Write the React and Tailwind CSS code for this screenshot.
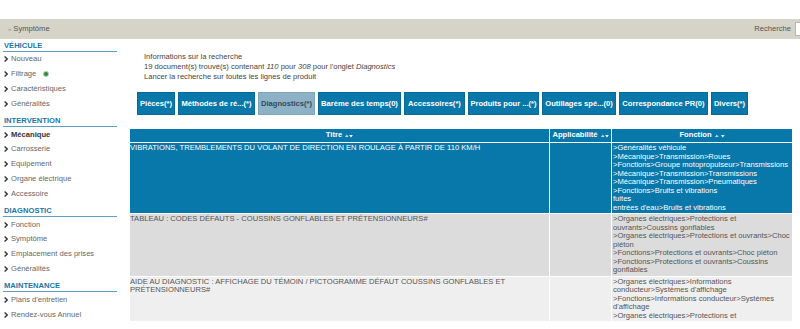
import React from "react";

const SECTIONS = [
  {
    title: "VÉHICULE",
    items: [
      { label: "Nouveau" },
      { label: "Filtrage", dot: true },
      { label: "Caractéristiques" },
      { label: "Généralités" },
    ],
  },
  {
    title: "INTERVENTION",
    items: [
      { label: "Mécanique", active: true },
      { label: "Carrosserie" },
      { label: "Equipement" },
      { label: "Organe électrique" },
      { label: "Accessoire" },
    ],
  },
  {
    title: "DIAGNOSTIC",
    items: [
      { label: "Fonction" },
      { label: "Symptôme" },
      { label: "Emplacement des prises" },
      { label: "Généralités" },
    ],
  },
  {
    title: "MAINTENANCE",
    items: [{ label: "Plans d'entretien" }, { label: "Rendez-vous Annuel" }],
  },
];

const TABS = [
  { label: "Pièces(*)", w: "w-[38px]" },
  { label: "Méthodes de ré...(*)", w: "w-[77px]" },
  { label: "Diagnostics(*)", w: "w-[57px]", current: true },
  { label: "Barème des temps(0)", w: "w-[83px]" },
  { label: "Accessoires(*)", w: "w-[61px]" },
  { label: "Produits pour ...(*)", w: "w-[71px]" },
  { label: "Outillages spé...(0)", w: "w-[74px]" },
  { label: "Correspondance PR(0)", w: "w-[89px]" },
  { label: "Divers(*)", w: "w-[37px]" },
];

const ROWS = [
  {
    bg: "bg-[#0877a9]",
    text: "text-white",
    title: [
      "VIBRATIONS, TREMBLEMENTS DU VOLANT DE DIRECTION EN ROULAGE À PARTIR DE 110 KM/H",
    ],
    fonction: [
      ">Généralités véhicule",
      ">Mécanique>Transmission>Roues",
      ">Fonctions>Groupe motopropulseur>Transmissions",
      ">Mécanique>Transmission>Transmissions",
      ">Mécanique>Transmission>Pneumatiques",
      ">Fonctions>Bruits et vibrations",
      "fuites",
      "entrées d'eau>Bruits et vibrations",
    ],
  },
  {
    bg: "bg-[#dcdcdc]",
    text: "text-[#555]",
    title: ["TABLEAU : CODES DÉFAUTS - COUSSINS GONFLABLES ET PRÉTENSIONNEURS#"],
    fonction: [
      ">Organes électriques>Protections et",
      "ouvrants>Coussins gonflables",
      ">Organes électriques>Protections et ouvrants>Choc",
      "piéton",
      ">Fonctions>Protections et ouvrants>Choc piéton",
      ">Fonctions>Protections et ouvrants>Coussins",
      "gonflables",
    ],
  },
  {
    bg: "bg-[#efefef]",
    text: "text-[#555]",
    title: [
      "AIDE AU DIAGNOSTIC : AFFICHAGE DU TÉMOIN / PICTOGRAMME DÉFAUT COUSSINS GONFLABLES ET",
      "PRÉTENSIONNEURS#",
    ],
    fonction: [
      ">Organes électriques>Informations",
      "conducteur>Systèmes d'affichage",
      ">Fonctions>Informations conducteur>Systèmes",
      "d'affichage",
      ">Organes électriques>Protections et",
    ],
  },
];

function Chevron() {
  return (
    <svg width="4" height="6" viewBox="0 0 4 6" className="shrink-0">
      <path d="M0.6 0.6 L3.2 3 L0.6 5.4" fill="none" stroke="#333" strokeWidth="1.4" />
    </svg>
  );
}

function SortArrows({ spaced }) {
  return (
    <svg width={spaced ? 10 : 8} height="5" viewBox={spaced ? "0 0 10 5" : "0 0 8 5"} className="ml-[3px] inline-block">
      <path d="M0 4 L1.8 1.5 L3.6 4 Z" fill="#c8dbe6" />
      {spaced ? (
        <path d="M6 2 L9.6 2 L7.8 4.5 Z" fill="#ffffff" />
      ) : (
        <path d="M4.2 2 L7.8 2 L6 4.5 Z" fill="#ffffff" />
      )}
    </svg>
  );
}

export default function App() {
  return (
    <div className="h-[329px] w-[800px] overflow-hidden bg-white font-['Liberation_Sans',Arial,sans-serif] text-[7.6px] leading-[10px] text-[#555]">
      <div className="h-[19px]" />

      {/* Top bar */}
      <div className="flex h-[20px] items-center justify-between bg-[#d6d3c8] pl-[8px]">
        <div className="flex items-center text-[#555]">
          <span className="mr-[2px] text-[6px] text-[#999]">»</span>
          Symptôme
        </div>
        <div className="flex items-center gap-[4px] text-[#555]">
          <span>Recherche</span>
          <div className="h-[14px] w-[5px] border border-r-0 border-[#b5b5b5] bg-white" />
        </div>
      </div>

      <div className="flex">
        {/* Sidebar */}
        <aside className="w-[118px] shrink-0 pl-[3px] pr-[1px] pt-[2px]">
          {SECTIONS.map((section, i) => (
            <div key={section.title} className={i > 0 ? "mt-[5px]" : ""}>
              <div className="h-[11px] border-b border-[#5aa0c3] pl-[1px] font-bold text-[#1a76a8]">
                {section.title}
              </div>
              {section.items.map((item) => (
                <div key={item.label} className="flex h-[14.8px] items-center gap-[3px] pl-[1px]">
                  <Chevron />
                  <span className={item.active ? "font-bold text-[#333]" : "text-[#666]"}>
                    {item.label}
                  </span>
                  {item.dot && (
                    <span className="ml-[5px] h-[4px] w-[4px] rounded-full bg-[#2f8a3a] ring-1 ring-[#a8d3ad]" />
                  )}
                </div>
              ))}
            </div>
          ))}
        </aside>

        {/* Main */}
        <main className="flex-1">
          <div className="pl-[26px] pt-[13px] text-[#444]">
            <p>Informations sur la recherche</p>
            <p>
              19 document(s) trouvé(s) contenant <i>110</i> pour <i>308</i> pour l'onglet{" "}
              <i>Diagnostics</i>
            </p>
            <p>Lancer la recherche sur toutes les lignes de produit</p>
          </div>

          <div className="mt-[10px] flex gap-[3px] pl-[19px]">
            {TABS.map((tab) => (
              <div
                key={tab.label}
                className={`flex h-[23px] items-center justify-center whitespace-nowrap border font-bold ${tab.w} ${
                  tab.current
                    ? "border-[#7ea4b9] bg-[#8db2c6] text-[#34495a]"
                    : "border-[#0a6a97] bg-[#0877a9] text-white"
                }`}
              >
                {tab.label}
              </div>
            ))}
          </div>

          <div className="ml-[12px] mt-[14px] w-[662px] leading-[8.5px]">
            {/* Header */}
            <div className="flex h-[13px] bg-[#0877a9] font-bold text-white">
              <div className="flex w-[419px] items-center justify-center">
                Titre
                <SortArrows />
              </div>
              <div className="flex w-[62px] items-center justify-center border-l border-white">
                Applicabilité
                <SortArrows />
              </div>
              <div className="flex flex-1 items-center justify-center border-l border-white">
                Fonction
                <SortArrows spaced />
              </div>
            </div>

            {ROWS.map((row, r) => (
              <div key={r} className={`flex border-t border-white ${row.bg} ${row.text}`}>
                <div className="w-[419px] py-[1px]">
                  {row.title.map((line) => (
                    <div key={line} className="whitespace-nowrap">
                      {line}
                    </div>
                  ))}
                </div>
                <div className="w-[62px] border-l border-white" />
                <div className="flex-1 border-l border-white py-[1px] pl-[1px]">
                  {row.fonction.map((line, k) => (
                    <div key={k} className="whitespace-nowrap">
                      {line}
                    </div>
                  ))}
                </div>
              </div>
            ))}
          </div>
        </main>
      </div>
    </div>
  );
}
